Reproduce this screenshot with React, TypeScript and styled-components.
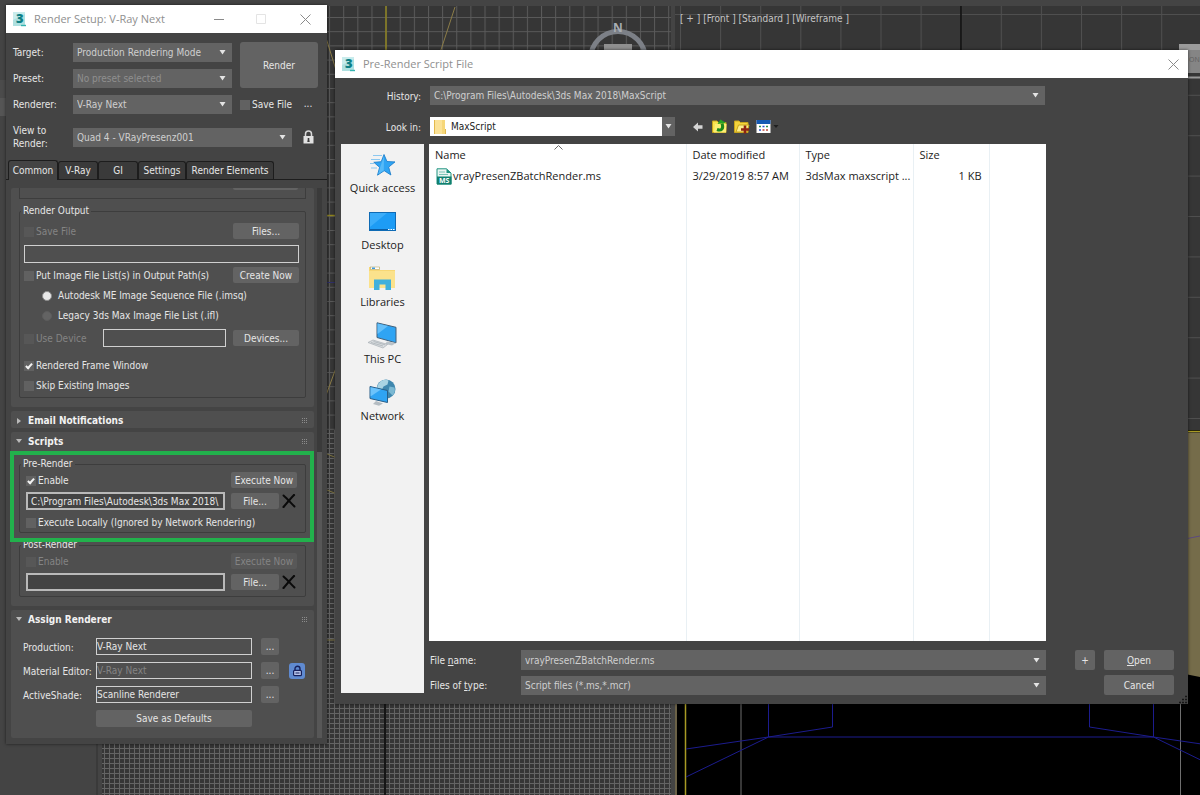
import React, { useId } from 'react';
import styled, { createGlobalStyle, css } from 'styled-components';

const ui = '"DejaVu Sans Condensed", "DejaVu Sans", sans-serif';
const shell = '"Open Sans", "Noto Sans", sans-serif';

const color = {
  frame: '#444444',
  panel: '#4f4f4f',
  control: '#636363',
  text: '#e6e6e6',
  soft: '#cfcfcf',
  muted: '#848484',
  line: '#3d3d3d',
};

const Global = createGlobalStyle`
  *, *::before, *::after { box-sizing: border-box; }
  body { margin: 0; background: ${color.frame}; overflow: hidden; }
  button, input, select { font: inherit; color: inherit; margin: 0; }
`;

/* ---------- desktop and viewports ---------- */

const Desktop = styled.div`
  position: relative;
  height: 100vh;
  padding-top: 6px;
  background: ${color.frame};
  font: 10px/14px ${ui};
  color: ${color.text};
`;

const Workspace = styled.div`
  display: grid;
  grid-template-columns: 98px 569fr 525fr;
  grid-template-rows: 424fr 365fr;
  column-gap: 4px;
  height: 100%;
`;

const CommandStrip = styled.div`
  grid-row: 1 / 3;
  padding-top: 74px;
  border-right: 2px solid #3a3a3a;
`;

const StripSlot = styled.div<{ $tone: string }>`
  height: 18px;
  background: ${(p) => p.$tone};
`;

const Viewport = styled.section<{ $bg?: string }>`
  position: relative;
  overflow: hidden;
  min-width: 0;
  background: ${(p) => p.$bg ?? '#363636'};
`;

const Scene = styled.svg`
  display: block;
  width: 100%;
  height: 100%;
`;

const ViewLabel = styled.span`
  position: absolute;
  left: 5px;
  top: 5px;
  line-height: 16px;
  color: #c4c4c4;
`;

/* ---------- shared window parts ---------- */

const Window = styled.section`
  position: absolute;
  background: ${color.frame};
  box-shadow: 0 0 3px rgba(0, 0, 0, 0.6);
`;

const SetupWindow = styled(Window)`
  left: 6px;
  top: 5px;
  width: 321px;
`;

const ScriptWindow = styled(Window)`
  left: 335px;
  right: 12px;
  top: 50px;
`;

const TitleBar = styled.header<{ $end: number }>`
  display: flex;
  align-items: center;
  gap: 6px;
  height: 28px;
  padding: 0 ${(p) => p.$end}px 0 7px;
  background: #fff;
  color: #8f8f8f;
  font: 11px/16px ${shell};
`;

const Title = styled.h1`
  flex: 1;
  margin: 0;
  font: inherit;
`;

const CaptionButton = styled.button<{ $faint?: boolean }>`
  display: grid;
  place-items: center;
  width: 36px;
  height: 28px;
  padding: 0;
  border: 0;
  background: none;
  color: ${(p) => (p.$faint ? '#e4e4e4' : '#8a8a8a')};
  &:last-child { width: 12px; margin-left: 14px; }
`;

const PushButton = styled.button<{ $w?: number; $h?: number }>`
  flex: none;
  width: ${(p) => (p.$w ? `${p.$w}px` : 'auto')};
  height: ${(p) => p.$h ?? 16}px;
  padding: 1px 0 0;
  border: 0;
  border-radius: 2px;
  background: ${color.control};
  color: ${color.text};
  text-align: center;
  line-height: 14px;
  &:disabled { background: #585858; color: ${color.muted}; }
`;

const IconButton = styled.button`
  display: grid;
  place-items: center;
  flex: none;
  min-width: 16px;
  padding: 0;
  border: 0;
  background: none;
`;

const ComboBox = styled.div<{ $tall?: boolean }>`
  display: grid;
  align-items: center;
  min-width: 0;
  height: ${(p) => (p.$tall ? 20 : 19)}px;
  background: ${color.control};
  color: ${color.soft};
  > * { grid-area: 1 / 1; }
  > svg { justify-self: end; margin-right: 6px; pointer-events: none; }
`;

const comboField = css`
  width: 100%;
  height: 100%;
  padding: 1px 16px 0 4px;
  border: 0;
  border-radius: 0;
  outline: 0;
  background: none;
  color: inherit;
  &:disabled { color: #8f8f8f; opacity: 1; }
`;

const Select = styled.select`
  appearance: none;
  ${comboField}
`;

const ComboInput = styled.input`
  ${comboField}
`;

const Field = styled.input<{ $w?: number; $h?: number; $strong?: boolean }>`
  width: ${(p) => (p.$w ? `${p.$w}px` : '100%')};
  height: ${(p) => p.$h ?? 18}px;
  padding: 0 ${(p) => (p.$strong ? 3 : 0)}px;
  border: ${(p) => (p.$strong ? 2 : 1)}px solid ${(p) => (p.$strong ? '#b9b9b9' : '#d0d0d0')};
  border-radius: 0;
  outline: 0;
  background: ${(p) => (p.$strong ? '#434343' : color.panel)};
  color: ${color.text};
  &:disabled { color: ${color.muted}; }
`;

const CheckLabel = styled.label<{ $off?: boolean; $gap?: number }>`
  display: flex;
  align-items: center;
  gap: ${(p) => p.$gap ?? 2}px;
  flex: 1;
  padding-top: 2px;
  white-space: nowrap;
  color: ${(p) => (p.$off ? color.muted : color.text)};
`;

const Tick = styled.input.attrs({ type: 'checkbox' })`
  appearance: none;
  display: grid;
  place-items: center;
  flex: none;
  width: 10px;
  height: 10px;
  background: #616161;
  &:disabled { background: #575757; }
  &:checked::after {
    content: '';
    width: 4px;
    height: 7px;
    margin-bottom: 2px;
    border: solid #f2f2f2;
    border-width: 0 2px 2px 0;
    transform: rotate(42deg);
  }
`;

const Radio = styled.input.attrs({ type: 'radio' })`
  appearance: none;
  flex: none;
  width: 10px;
  height: 10px;
  border: 1px solid #5c5c5c;
  border-radius: 50%;
  background: #636363;
  &:checked { background: #e8e8e8; border-color: #8c8c8c; }
`;

/* ---------- render setup ---------- */

const TargetGrid = styled.div`
  display: grid;
  grid-template-columns: 60px 159px 1fr;
  grid-auto-rows: 20px;
  row-gap: 6px;
  align-items: center;
  padding: 9px 9px 0 7px;
  > label { padding-top: 2px; }
`;

const RenderButton = styled(PushButton)`
  grid-area: 1 / 3 / 3 / 4;
  width: auto;
  height: 100%;
  margin-left: 8px;
  border-radius: 3px;
`;

const SaveOption = styled.div`
  display: flex;
  align-items: center;
  margin-left: 8px;
  padding-right: 2px;
`;

const ViewRow = styled.div`
  display: grid;
  grid-template-columns: 60px 1fr 26px;
  align-items: center;
  padding: 10px 9px 0 7px;
  line-height: 13px;
  > ${IconButton} { justify-self: end; margin-right: 2px; }
`;

const Tabs = styled.nav`
  display: flex;
  align-items: flex-end;
  height: 30px;
  padding-left: 2px;
  border-bottom: 1px solid #1d1d1d;
`;

const Tab = styled.button<{ $w: number; $active?: boolean }>`
  width: ${(p) => p.$w}px;
  height: ${(p) => (p.$active ? 20 : 18)}px;
  margin-bottom: ${(p) => (p.$active ? -1 : 0)}px;
  padding: 0;
  border: 1px solid #1d1d1d;
  border-bottom: 0;
  border-radius: 3px 3px 0 0;
  background: ${(p) => (p.$active ? color.frame : '#3a3a3a')};
  white-space: nowrap;
`;

const ScrollArea = styled.div`
  display: flex;
  gap: 3px;
  padding: 8px 5px 6px;
`;

const Rollouts = styled.div`
  flex: 1;
  display: flex;
  flex-direction: column;
  gap: 4px;
  min-width: 0;
`;

const ScrollTrack = styled.div`
  width: 5px;
  padding-top: 264px;
  background: #3a3a3a;
  display: flex;
`;

const ScrollThumb = styled.div`
  flex: 1;
  background: #575757;
`;

const Rollout = styled.section`
  border-radius: 2px;
  background: ${color.panel};
`;

const RolloutHeader = styled.h2`
  display: flex;
  align-items: center;
  gap: 6px;
  height: 17px;
  margin: 0;
  padding: 2px 6px 0 5px;
  font: bold 10px/15px ${ui};
  color: #f2f2f2;
  > span { flex: 1; }
`;

const RolloutBody = styled.div<{ $top?: number }>`
  display: flex;
  flex-direction: column;
  gap: 5px;
  padding: ${(p) => p.$top ?? 0}px 8px 9px;
`;

const ScrolledGroup = styled.div`
  display: flex;
  justify-content: flex-end;
  height: 11px;
  padding-right: 7px;
  border: solid ${color.line};
  border-width: 0 1px 1px;
`;

const ScrolledButton = styled.div`
  width: 65px;
  height: 2px;
  border-radius: 0 0 2px 2px;
  background: ${color.control};
`;

const Group = styled.fieldset<{ $pad?: string }>`
  min-width: 0;
  margin: 0;
  padding: ${(p) => p.$pad ?? '5px 6px 2px 4px'};
  border: 1px solid ${color.line};
  border-radius: 2px;
`;

const Legend = styled.legend<{ $pull?: number }>`
  margin-left: ${(p) => -(p.$pull ?? 3)}px;
  padding: 0 2px;
  line-height: 14px;
`;

const Row = styled.div<{ $h?: number; $mt?: number; $gap?: number; $indent?: number }>`
  display: flex;
  align-items: center;
  gap: ${(p) => p.$gap ?? 0}px;
  height: ${(p) => p.$h ?? 16}px;
  margin-top: ${(p) => p.$mt ?? 0}px;
  padding-left: ${(p) => p.$indent ?? 0}px;
`;

const DeviceLabel = styled(CheckLabel)`
  flex: 0 0 79px;
`;

const Highlighted = styled.div`
  position: relative;
  &::after {
    content: '';
    position: absolute;
    inset: -6px -8px -9px -9px;
    border: 4px solid #22b14c;
    pointer-events: none;
    z-index: 1;
  }
`;

const AssignLine = styled.div`
  display: grid;
  grid-template-columns: 73px 156px 9px 18px 10px 16px;
  align-items: center;
  > label { padding-top: 2px; }
  > ${PushButton} { grid-column: 4; }
  > ${IconButton} { grid-column: 6; }
`;

const AssignList = styled.div`
  display: flex;
  flex-direction: column;
  gap: 7px;
  padding: 11px 0 11px 12px;
  white-space: nowrap;
`;

const DefaultsLine = styled.div`
  display: grid;
  grid-template-columns: 73px 156px;
  > ${PushButton} { grid-column: 2; }
`;

const LockToggle = styled(IconButton)`
  min-width: 15px;
  height: 16px;
  border-radius: 3px;
  background: #5f8ad0;
`;

/* ---------- file dialog ---------- */

const DialogBody = styled.div`
  display: flex;
  flex-direction: column;
  padding: 8px 14px 9px 6px;
`;

const DialogRow = styled.div<{ $mt?: number }>`
  display: grid;
  grid-template-columns: 80px 1fr 120px;
  column-gap: 9px;
  align-items: center;
  margin-top: ${(p) => p.$mt ?? 0}px;
  > label { padding-top: 2px; text-align: right; }
`;

const LookIn = styled.div`
  display: flex;
  align-items: center;
  gap: 6px;
`;

const FolderCombo = styled.div`
  display: grid;
  grid-template-columns: 1fr 13px;
  align-items: center;
  width: 245px;
  height: 19px;
  margin-right: 9px;
  background: linear-gradient(to left, ${color.control} 13px, #fff 13px);
  color: #222;
  > select { grid-area: 1 / 1 / 2 / 3; padding-left: 21px; }
  > svg:first-child { grid-area: 1 / 1; margin-left: 4px; }
  > svg:last-child { grid-area: 1 / 2; justify-self: center; pointer-events: none; }
`;

const Browser = styled.div`
  display: flex;
  gap: 5px;
  margin-top: 8px;
`;

const Places = styled.nav`
  display: flex;
  flex-direction: column;
  flex: none;
  gap: 11px;
  width: 83px;
  margin-bottom: 2px;
  padding-top: 7px;
  background: #f2f2f2;
`;

const Place = styled.a`
  display: flex;
  flex-direction: column;
  align-items: center;
  color: #1c1c1c;
  text-decoration: none;
  font: 11px/18px ${shell};
`;

const BrowserMain = styled.div`
  flex: 1;
  min-width: 0;
`;

const FileList = styled.div`
  display: flex;
  min-height: 497px;
  margin-right: 128px;
  background: #fff;
`;

const FileTable = styled.table`
  width: 100%;
  border-collapse: collapse;
  table-layout: fixed;
  font: 11px/18px ${shell};
  color: #1c1c1c;
  th, td {
    padding: 0 0 0 6px;
    border-right: 1px solid #e9f0f4;
    text-align: left;
    font-weight: 400;
    white-space: nowrap;
  }
  th { height: 22px; position: relative; }
  tbody td { height: 20px; }
  tbody tr:last-child td { height: auto; }
  td:first-child { padding-left: 7px; }
  td:nth-child(4) { padding-right: 7px; text-align: right; }
  th:last-child, td:last-child { border-right: 0; }
`;

const Col = styled.col<{ $w?: number }>`
  width: ${(p) => (p.$w ? `${p.$w}px` : 'auto')};
`;

const SortMark = styled.svg`
  position: absolute;
  top: 1px;
  left: 125px;
`;

const FileName = styled.span`
  display: flex;
  align-items: center;
  gap: 1px;
`;

const Bottom = styled.div`
  display: grid;
  grid-template-columns: 82px 1fr 20px 70px;
  column-gap: 9px;
  row-gap: 5px;
  align-items: center;
  margin-top: 9px;
  padding-left: 1px;
  > label { padding-top: 2px; }
  > ${ComboBox} { margin-right: 20px; }
  > ${PushButton}:last-of-type { grid-column: 4; }
`;

const Grip = styled.svg`
  position: absolute;
  right: 0;
  bottom: 0;
`;

/* ---------- drawings ---------- */

const DownArrow = () => (
  <svg width="7" height="5" viewBox="0 0 7 5" aria-hidden="true">
    <path d="M0.500 0h6L3.500 4.500z" fill="#e4e4e4" />
  </svg>
);

const AppIcon = () => (
  <svg width="15" height="17" viewBox="0 0 15 17" overflow="visible" aria-hidden="true">
    <rect x="0" y="1" width="12" height="14" fill="#c9ecec" />
    <path d="M0 9l12-6v12H0z" fill="#aee0e0" />
    <text x="3" y="12" fontFamily="Open Sans, sans-serif" fontWeight="800" fontSize="13" fill="#0d7f86">3</text>
    <path d="M8 14.500h5" stroke="#35b3b0" strokeWidth="1.400" />
  </svg>
);

const Close = () => (
  <svg width="11" height="11" viewBox="0 0 11 11" aria-hidden="true">
    <path d="M.5.5l10 10M10.500.5l-10 10" stroke="currentColor" fill="none" />
  </svg>
);

const Cross = () => (
  <svg width="14" height="14" viewBox="0 0 14 14" aria-hidden="true">
    <path d="M1.500 1.500C5 4.500 9 9 12.500 12.500" stroke="#0a0a0a" strokeWidth="2" fill="none" strokeLinecap="round" />
    <path d="M12 1C8.500 4.500 5 9 1.500 13" stroke="#0a0a0a" strokeWidth="2.200" fill="none" strokeLinecap="round" />
  </svg>
);

const Padlock = () => (
  <svg width="11" height="14" viewBox="0 0 11 14" aria-hidden="true">
    <path d="M2.500 7V4a3 3 0 0 1 6 0v3" stroke="#d8d8d8" strokeWidth="1.500" fill="none" />
    <rect x=".5" y="6" width="10" height="7.500" fill="#e2e2e2" />
    <path d="M4.700 8h1.600v1.500l.4 2.500H4.300l.4-2.500z" fill="#3c3c3c" />
  </svg>
);

const SmallLock = () => (
  <svg width="11" height="12" viewBox="0 0 11 12" aria-hidden="true">
    <path d="M3 5V3.700a2.500 2.500 0 0 1 5 0V5" stroke="#16205c" strokeWidth="1.400" fill="none" />
    <rect x="1.600" y="5.300" width="7.800" height="5.400" rx="1" fill="#b7c4ea" stroke="#16205c" strokeWidth="1.200" />
    <path d="M3.500 8h4" stroke="#16205c" />
  </svg>
);

const Disclosure = ({ open }: { open?: boolean }) => (
  <svg width="6" height="6" viewBox="0 0 6 6" aria-hidden="true">
    <path d={open ? 'M0 0h6L3 4z' : 'M1 0v6l4-3z'} fill="#b9b9b9" />
  </svg>
);

const Handle = () => (
  <svg width="6" height="6" viewBox="0 0 6 6" aria-hidden="true">
    <path d="M0 .5h6M0 2.500h6M0 4.500h6" stroke="#8c8c8c" strokeDasharray="1 1" />
  </svg>
);

const FolderIcon = () => (
  <svg width="13" height="16" viewBox="0 0 13 16" aria-hidden="true">
    <path d="M1 1h10v9h1v5H1z" fill="#f6d77a" />
    <path d="M1 1h7v14H1z" fill="#fbe298" />
    <path d="M.5 1v14M11.500 10v5" stroke="#e3b94d" />
  </svg>
);

const BackIcon = () => (
  <svg width="10" height="10" viewBox="0 0 10 10" aria-hidden="true">
    <path d="M0 5l5-4.500V3.200h4.500v3.600H5v2.700z" fill="#d4d4d4" />
  </svg>
);

const yellowFolder = 'M.5 13.500V2h4.500l1.500 1.500h7.500v10z';

const UpFolderIcon = () => (
  <svg width="16" height="15" viewBox="0 0 16 15" aria-hidden="true">
    <path d={yellowFolder} fill="#f9e24e" stroke="#c8a51c" />
    <path d="M2 13.500L3 5h11.500l-.5 8.500z" fill="#fbee74" />
    <path d="M5 10.500c4.500 1.500 7-1 5-6" stroke="#1c8a1c" strokeWidth="3" fill="none" />
    <path d="M5.500 5L8.500.5 14 4z" fill="#25a325" />
  </svg>
);

const NewFolderIcon = () => (
  <svg width="16" height="15" viewBox="0 0 16 15" aria-hidden="true">
    <path d={yellowFolder} fill="#f4d43c" stroke="#c8a51c" />
    <path d="M2 13l2.500-7H15l-2 7z" fill="#fbee8c" stroke="#c8a51c" />
    <path d="M11 6.500v8M7 10.500h8" stroke="#8e2412" strokeWidth="2.600" />
  </svg>
);

const ViewMenuIcon = () => (
  <svg width="23" height="15" viewBox="0 0 23 15" aria-hidden="true">
    <rect x=".5" y="1" width="14" height="13" fill="#fff" />
    <rect x=".5" y="1" width="14" height="4" fill="#1459b3" />
    <path d="M3 7.500h2M10 7.500h2" stroke="#2d8f4e" strokeWidth="1.500" />
    <path d="M6.500 7.500h2M3 11h2" stroke="#2b4fd0" strokeWidth="1.500" />
    <path d="M6.500 11h2M10 11h2" stroke="#c04a3a" strokeWidth="1.500" />
    <path d="M17.500 6h5L20 9z" fill="#1f1f1f" />
  </svg>
);

const ScriptFileIcon = () => (
  <svg width="16" height="17" viewBox="0 0 16 17" overflow="visible" aria-hidden="true">
    <path d="M1 .8h9.500L15 5v11H1z" fill="#eaf6f2" stroke="#1f9380" />
    <path d="M10.500.8V5H15z" fill="#1f9380" />
    <path d="M3 4h6M3 6.500h9" stroke="#7cc4b6" />
    <rect x="1" y="8.500" width="14.500" height="8" fill="#11806f" />
    <text x="3" y="15" fontFamily="Open Sans, sans-serif" fontWeight="700" fontSize="7" fill="#fff">MS</text>
  </svg>
);

const QuickIcon = () => (
  <svg width="30" height="28" viewBox="0 0 30 28" aria-hidden="true">
    <path d="M16 3.500l3 7 8 .4-6.300 5.200 2.200 7.900-6.700-4.300-6.700 4.500 2.100-7.900-5.800-5 7.400-.6z" fill="#2fa4f3" stroke="#1479c8" strokeWidth=".8" />
    <path d="M16 5l-.2 14.500-5.600 3.800 1.900-6.800z" fill="#56baf8" />
    <path d="M5 4.500h9M3 8.500h9M2 12.500h4M3 17h6" stroke="#8cc8f0" strokeWidth="1" />
  </svg>
);

const DesktopIcon = () => (
  <svg width="30" height="28" viewBox="0 0 30 28" aria-hidden="true">
    <rect x="1.500" y="4.500" width="26" height="18" fill="#1d9cf5" stroke="#0f6bb5" />
    <path d="M2 5h17L2 19z" fill="#3badfa" />
    <path d="M2 21.500h18" stroke="#0d5fa6" />
    <path d="M20 21.500h7" stroke="#fff" strokeDasharray="1.500 1" />
  </svg>
);

const LibrariesIcon = () => (
  <svg width="30" height="28" viewBox="0 0 30 28" aria-hidden="true">
    <path d="M1 2h11v3h15v18H1z" fill="#f7d774" />
    <path d="M1 6h26v17H1z" fill="#fbe28c" />
    <rect x="2.500" y="2" width="9" height="2.500" fill="#fff" stroke="#b9a86a" strokeWidth=".6" />
    <rect x="4" y="2.500" width="3" height="1.500" fill="#3b9adf" />
    <path d="M6 25V14.500h17V25h-5.500v-5.500h-6V25z" fill="#3fb0dc" />
  </svg>
);

const PcIcon = () => (
  <svg width="30" height="28" viewBox="0 0 30 28" aria-hidden="true">
    <path d="M9 .8l19 4.500v15.500L9 15.500z" fill="#2fa4f3" stroke="#44617a" />
    <path d="M9.500 1.500L20 4 9.500 12z" fill="#65c0fa" />
    <path d="M19 19.500l9 1.500-4 2.500-7-1.500z" fill="#b9c2c8" />
    <path d="M0 20.500l5-2.500 14.500 4.500-4.500 3.500z" fill="#d9dde0" stroke="#a7afb5" strokeWidth=".7" />
    <path d="M3 20.500l12 3.500M5.500 19.500l11.500 3.300" stroke="#9aa3a9" strokeWidth=".6" />
  </svg>
);

const NetworkIcon = () => (
  <svg width="30" height="28" viewBox="0 0 30 28" aria-hidden="true">
    <circle cx="18" cy="10" r="9.500" fill="#3f87ae" />
    <path d="M12.500 2.500c3-2.500 6-2 8-1l-1 4-4 2-2 4-4-1c-1-3 1-6 3-8z" fill="#a9d3e3" />
    <path d="M21.500 7.500l5 1c1 3 0 6-2 8l-4-4z" fill="#7cb9d3" />
    <path d="M2 7.500l17.500 4v12L2 19.500z" fill="#2fa4f3" stroke="#2a5f88" />
    <path d="M2.500 8.200l10.500 2.300-10.500 7z" fill="#6cc3fb" />
    <path d="M8 22l7 2.500-4 2.200-6-1.800z" fill="#b4bcc2" />
  </svg>
);

/* ---------- scenes ---------- */

const TopScene = () => {
  const id = useId();
  return (
    <Scene aria-hidden="true">
      <defs>
        <pattern id={id} x="1" y="11" width="14.130" height="14.200" patternUnits="userSpaceOnUse">
          <path d="M.5 0v14.200M0 .5h14.130" stroke="#5a5a5a" />
        </pattern>
      </defs>
      <rect width="100%" height="100%" fill={`url(#${id})`} />
      <path d="M284 0v424M0 209.500h571" stroke="#8f8420" strokeWidth="1.500" />
      <path d="M0 276.500h571" stroke="#30306a" />
      <path d="M353 1l-18 55M224 32l22 70M234 362l-11 30" stroke="#8c7d48" fill="none" />
      <circle cx="516" cy="53" r="27.500" fill="none" stroke="#7c8087" strokeWidth="5" />
      <text x="511" y="26" fontFamily="Open Sans, sans-serif" fontWeight="700" fontSize="12" fill="#a8adb3">N</text>
      <rect x="502" y="38" width="28" height="30" fill="#8f8f8f" />
    </Scene>
  );
};

const FrontScene = () => {
  const id = useId();
  return (
    <Scene aria-hidden="true">
      <defs>
        <pattern id={id} x="5" y="8" width="40.100" height="40.400" patternUnits="userSpaceOnUse">
          <path d="M.5 0v40.400M0 .5h40.100" stroke="#4f4f4f" />
        </pattern>
      </defs>
      <rect width="100%" height="100%" fill={`url(#${id})`} />
      <path d="M286 0v424" stroke="#0c0c0c" strokeWidth="1.500" />
      <rect x="504" y="38" width="30" height="29" fill="#858585" />
      <rect x="504" y="38" width="30" height="6" fill="#9b9b9b" />
      <text x="514" y="56" fontFamily="Open Sans, sans-serif" fontSize="7" fill="#5e5e5e">ON</text>
      <path d="M504 71.500h30" stroke="#999" strokeWidth="2" />
    </Scene>
  );
};

const FineScene = () => {
  const id = useId();
  return (
    <Scene aria-hidden="true">
      <defs>
        <pattern id={id} width="5" height="5" patternUnits="userSpaceOnUse">
          <path d="M2.500 0v5M0 3.500h5" stroke="#646464" />
        </pattern>
      </defs>
      <rect width="100%" height="100%" fill={`url(#${id})`} />
      <path d="M283 0v365" stroke="#161616" strokeWidth="2" />
      <path d="M225 24l10 4M225 60l10 4M225 210h10" stroke="#7d7340" />
    </Scene>
  );
};

const CameraScene = () => (
  <Scene aria-hidden="true">
    <path d="M1 0v365" stroke="#6b6147" strokeWidth="2" />
    <path d="M10.500 365V1.500H540" stroke="#a89a24" fill="none" strokeWidth="1.500" />
    <path d="M505 2.500h40V251l-40-8z" fill="#756c4a" />
    <path d="M505 110l20-4" stroke="#5c4a80" />
    <path d="M66 0v365M505.500 260v105" stroke="#6f6f6f" />
    <path
      d="M93.500 240v67h385v-67M93.500 307l64-10v-57M478.500 307l-64-10v-57M11 319l82.500-12L11 347M540 316l-61.500-9 61.500 30"
      stroke="#1c1c8e"
      fill="none"
    />
  </Scene>
);

/* ---------- composed parts ---------- */

type ComboProps = { id: string; value: string; disabled?: boolean; tall?: boolean };

const Combo = ({ id, value, disabled, tall }: ComboProps) => (
  <ComboBox $tall={tall}>
    <Select id={id} disabled={disabled}>
      <option>{value}</option>
    </Select>
    <DownArrow />
  </ComboBox>
);

const ScriptGroup = ({ name, value, enabled, children }: {
  name: string; value: string; enabled: boolean; children?: React.ReactNode;
}) => (
  <Group $pad={enabled ? '1px 8px 2px 6px' : '1px 8px 5px 6px'}>
    <Legend $pull={5}>{name}</Legend>
    <Row>
      <CheckLabel $off={!enabled}>
        <Tick defaultChecked={enabled} disabled={!enabled} /> Enable
      </CheckLabel>
      <PushButton $w={66} disabled={!enabled}>Execute Now</PushButton>
    </Row>
    <Row $h={18} $mt={4}>
      <Field $w={200} $strong defaultValue={value} aria-label={`${name} script`} />
      <Row $indent={6} $gap={2}>
        <PushButton $w={48}>File...</PushButton>
        <IconButton aria-label={`Clear ${name} script`}><Cross /></IconButton>
      </Row>
    </Row>
    {children}
  </Group>
);

const renderers = [
  { label: 'Production:', value: 'V-Ray Next' },
  { label: 'Material Editor:', value: 'V-Ray Next', locked: true },
  { label: 'ActiveShade:', value: 'Scanline Renderer' },
];

const places = [
  { name: 'Quick access', Icon: QuickIcon },
  { name: 'Desktop', Icon: DesktopIcon },
  { name: 'Libraries', Icon: LibrariesIcon },
  { name: 'This PC', Icon: PcIcon },
  { name: 'Network', Icon: NetworkIcon },
];

const RenderSetup = () => (
  <SetupWindow aria-label="Render Setup">
    <TitleBar $end={16}>
      <AppIcon />
      <Title>Render Setup: V-Ray Next</Title>
      <CaptionButton aria-label="Minimize">
        <svg width="10" height="10" aria-hidden="true"><path d="M0 5.500h10" stroke="currentColor" /></svg>
      </CaptionButton>
      <CaptionButton aria-label="Maximize" $faint>
        <svg width="10" height="10" aria-hidden="true"><path d="M.5.5h9v9h-9z" stroke="currentColor" fill="none" /></svg>
      </CaptionButton>
      <CaptionButton aria-label="Close"><Close /></CaptionButton>
    </TitleBar>

    <TargetGrid>
      <label htmlFor="target">Target:</label>
      <Combo id="target" value="Production Rendering Mode" />
      <RenderButton>Render</RenderButton>
      <label htmlFor="preset">Preset:</label>
      <Combo id="preset" value="No preset selected" disabled />
      <label htmlFor="renderer">Renderer:</label>
      <Combo id="renderer" value="V-Ray Next" />
      <SaveOption>
        <CheckLabel><Tick /> Save File</CheckLabel>
        <IconButton aria-label="Choose output file">...</IconButton>
      </SaveOption>
    </TargetGrid>
    <ViewRow>
      <label htmlFor="view">View to<br />Render:</label>
      <Combo id="view" value="Quad 4 - VRayPresenz001" />
      <IconButton aria-label="Lock view"><Padlock /></IconButton>
    </ViewRow>

    <Tabs>
      <Tab $w={50} $active>Common</Tab>
      <Tab $w={40}>V-Ray</Tab>
      <Tab $w={40}>GI</Tab>
      <Tab $w={48}>Settings</Tab>
      <Tab $w={88}>Render Elements</Tab>
    </Tabs>

    <ScrollArea>
      <Rollouts>
        <Rollout>
          <RolloutBody>
            <ScrolledGroup><ScrolledButton /></ScrolledGroup>
            <Group>
              <Legend>Render Output</Legend>
              <Row>
                <CheckLabel $off><Tick disabled /> Save File</CheckLabel>
                <PushButton $w={66}>Files...</PushButton>
              </Row>
              <Row $h={18} $mt={6}><Field aria-label="Output file" /></Row>
              <Row $mt={4}>
                <CheckLabel><Tick /> Put Image File List(s) in Output Path(s)</CheckLabel>
                <PushButton $w={66}>Create Now</PushButton>
              </Row>
              <Row $h={20} $mt={2} $indent={18}>
                <CheckLabel $gap={6}><Radio name="list" defaultChecked /> Autodesk ME Image Sequence File (.imsq)</CheckLabel>
              </Row>
              <Row $h={20} $indent={18}>
                <CheckLabel $gap={6}><Radio name="list" /> Legacy 3ds Max Image File List (.ifl)</CheckLabel>
              </Row>
              <Row $h={18} $mt={4}>
                <DeviceLabel $off><Tick disabled /> Use Device</DeviceLabel>
                <Field $w={125} aria-label="Device" />
                <Row $indent={7}><PushButton $w={66}>Devices...</PushButton></Row>
              </Row>
              <Row $h={20} $mt={8}>
                <CheckLabel><Tick defaultChecked /> Rendered Frame Window</CheckLabel>
              </Row>
              <Row $h={20}>
                <CheckLabel><Tick /> Skip Existing Images</CheckLabel>
              </Row>
            </Group>
          </RolloutBody>
        </Rollout>

        <Rollout>
          <RolloutHeader><Disclosure /><span>Email Notifications</span><Handle /></RolloutHeader>
        </Rollout>

        <Rollout>
          <RolloutHeader><Disclosure open /><span>Scripts</span><Handle /></RolloutHeader>
          <RolloutBody $top={8}>
            <Highlighted>
              <ScriptGroup name="Pre-Render" enabled value="C:\Program Files\Autodesk\3ds Max 2018\">
                <Row $mt={4}>
                  <CheckLabel><Tick /> Execute Locally (Ignored by Network Rendering)</CheckLabel>
                </Row>
              </ScriptGroup>
            </Highlighted>
            <ScriptGroup name="Post-Render" enabled={false} value="" />
          </RolloutBody>
        </Rollout>

        <Rollout>
          <RolloutHeader><Disclosure open /><span>Assign Renderer</span><Handle /></RolloutHeader>
          <AssignList>
            {renderers.map(({ label, value, locked }) => (
              <AssignLine key={label}>
                <label htmlFor={label}>{label}</label>
                <Field id={label} $h={17} defaultValue={value} disabled={locked} />
                <PushButton $h={17} aria-label={`Choose ${label}`}>...</PushButton>
                {locked && <LockToggle aria-label="Lock to production"><SmallLock /></LockToggle>}
              </AssignLine>
            ))}
            <DefaultsLine>
              <PushButton $h={17}>Save as Defaults</PushButton>
            </DefaultsLine>
          </AssignList>
        </Rollout>
      </Rollouts>
      <ScrollTrack><ScrollThumb /></ScrollTrack>
    </ScrollArea>
  </SetupWindow>
);

const ScriptDialog = () => (
  <ScriptWindow role="dialog" aria-label="Pre-Render Script File">
    <TitleBar $end={9}>
      <AppIcon />
      <Title>Pre-Render Script File</Title>
      <CaptionButton aria-label="Close"><Close /></CaptionButton>
    </TitleBar>
    <DialogBody>
      <DialogRow>
        <label htmlFor="history">History:</label>
        <Combo id="history" value="C:\Program Files\Autodesk\3ds Max 2018\MaxScript" />
      </DialogRow>
      <DialogRow $mt={12}>
        <label htmlFor="look">Look in:</label>
        <LookIn>
          <FolderCombo>
            <FolderIcon />
            <Select id="look"><option>MaxScript</option></Select>
            <DownArrow />
          </FolderCombo>
          <IconButton aria-label="Back"><BackIcon /></IconButton>
          <IconButton aria-label="Up one level"><UpFolderIcon /></IconButton>
          <IconButton aria-label="New folder"><NewFolderIcon /></IconButton>
          <IconButton aria-label="View menu"><ViewMenuIcon /></IconButton>
        </LookIn>
      </DialogRow>
      <Browser>
        <Places>
          {places.map(({ name, Icon }) => (
            <Place key={name} href="#"><Icon />{name}</Place>
          ))}
        </Places>
        <BrowserMain>
          <FileList>
            <FileTable>
              <colgroup>
                <Col $w={257} /><Col $w={113} /><Col $w={114} /><Col $w={76} /><Col />
              </colgroup>
              <thead>
                <tr>
                  <th>
                    Name
                    <SortMark width="9" height="5" aria-hidden="true">
                      <path d="M.5 4.500l4-4 4 4" stroke="#6a6a6a" fill="none" />
                    </SortMark>
                  </th>
                  <th>Date modified</th>
                  <th>Type</th>
                  <th>Size</th>
                  <th />
                </tr>
              </thead>
              <tbody>
                <tr>
                  <td><FileName><ScriptFileIcon />vrayPresenZBatchRender.ms</FileName></td>
                  <td>3/29/2019 8:57 AM</td>
                  <td>3dsMax maxscript ...</td>
                  <td>1 KB</td>
                  <td />
                </tr>
                <tr><td /><td /><td /><td /><td /></tr>
              </tbody>
            </FileTable>
          </FileList>
          <Bottom>
            <label htmlFor="file-name">File <u>n</u>ame:</label>
            <ComboBox $tall>
              <ComboInput id="file-name" defaultValue="vrayPresenZBatchRender.ms" />
              <DownArrow />
            </ComboBox>
            <PushButton $h={20} aria-label="Increment file name">+</PushButton>
            <PushButton $h={20}><u>O</u>pen</PushButton>
            <label htmlFor="file-type">Files of <u>t</u>ype:</label>
            <Combo id="file-type" value="Script files (*.ms,*.mcr)" />
            <PushButton $h={20}>Cancel</PushButton>
          </Bottom>
        </BrowserMain>
      </Browser>
    </DialogBody>
    <Grip width="10" height="10" aria-hidden="true">
      <path d="M1 8.500h8M4 5.500h5M7 2.500h2" stroke="#161616" strokeWidth="1.500" strokeDasharray="2 1" />
    </Grip>
  </ScriptWindow>
);

export default function App() {
  return (
    <Desktop>
      <Global />
      <Workspace>
        <CommandStrip>
          <StripSlot $tone="#4b4b4b" />
          <StripSlot $tone="#555555" />
        </CommandStrip>
        <Viewport><TopScene /></Viewport>
        <Viewport>
          <FrontScene />
          <ViewLabel>[ + ] [Front ] [Standard ] [Wireframe ]</ViewLabel>
        </Viewport>
        <Viewport><FineScene /></Viewport>
        <Viewport $bg="#000"><CameraScene /></Viewport>
      </Workspace>
      <RenderSetup />
      <ScriptDialog />
    </Desktop>
  );
}
